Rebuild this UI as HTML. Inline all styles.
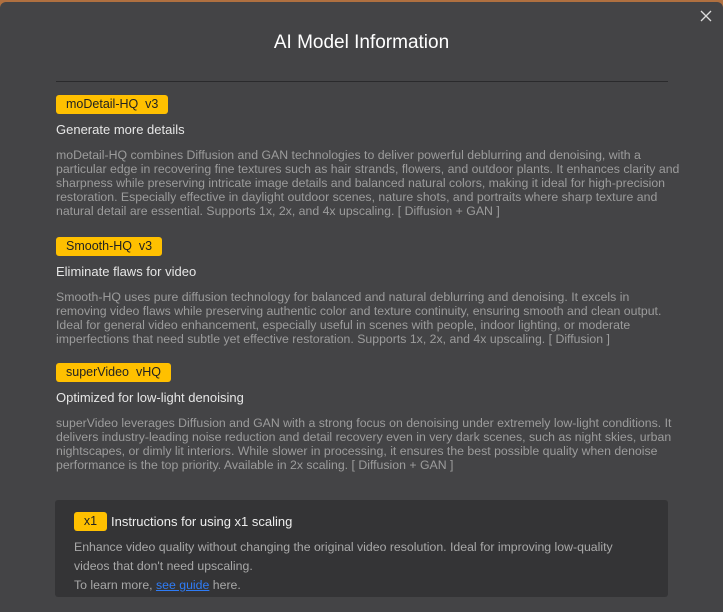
<!DOCTYPE html>
<html><head><meta charset="utf-8"><style>
*{margin:0;padding:0;box-sizing:border-box}
body{width:723px;height:607px;overflow:hidden;background:#b07040;font-family:"Liberation Sans",Arial,sans-serif;position:relative}
.m{position:absolute;left:0;top:2px;width:723px;height:610px;background:#444446;border-radius:6px 6px 0 0}
.t{position:absolute;top:30px;left:0;width:723px;text-align:center;color:#fff;font-size:19px}
.x{position:absolute;right:11px;top:8px}
.hr{position:absolute;left:56px;top:79px;width:612px;height:1px;background:#2a2a2c}
.b{position:absolute;left:56px;height:19px;background:#ffc000;border-radius:3px;color:#222;font-size:12.5px;line-height:19px;padding:0 10px;white-space:pre}
.s{position:absolute;left:56px;color:#e6e6e6;font-size:13px}
.d{position:absolute;left:56px;width:626px;color:#9c9c9c;font-size:12.3px;line-height:14px}
.box{position:absolute;left:55px;top:498px;width:613px;height:97px;background:#343436;border-radius:3px}
.box .x1{position:absolute;left:19px;top:12px;width:33px;height:19px;background:#ffc000;border-radius:3px;color:#222;font-size:12.5px;line-height:19px;text-align:center}
.box .h{position:absolute;left:56px;top:14px;color:#eee;font-size:13px}
.box .p{position:absolute;left:19px;top:38px;color:#a8a8a8;font-size:12.3px;line-height:19px;width:560px}
a{color:#2f7cf6;text-decoration:underline}
</style></head><body>
<div class="m">
<div class="t">AI Model Information</div>
<svg class="x" width="12" height="12" viewBox="0 0 12 12"><path d="M1 1L11 11M11 1L1 11" stroke="#ddd" stroke-width="1.3"/></svg>
<div class="hr"></div>
<div class="b" style="top:93px">moDetail-HQ  v3</div>
<div class="s" style="top:120px">Generate more details</div>
<div class="d" style="top:146px">moDetail-HQ combines Diffusion and GAN technologies to deliver powerful deblurring and denoising, with a particular edge in recovering fine textures such as hair strands, flowers, and outdoor plants. It enhances clarity and sharpness while preserving intricate image details and balanced natural colors, making it ideal for high-precision restoration. Especially effective in daylight outdoor scenes, nature shots, and portraits where sharp texture and natural detail are essential. Supports 1x, 2x, and 4x upscaling. [ Diffusion + GAN ]</div>
<div class="b" style="top:235px">Smooth-HQ  v3</div>
<div class="s" style="top:262px">Eliminate flaws for video</div>
<div class="d" style="top:288px">Smooth-HQ uses pure diffusion technology for balanced and natural deblurring and denoising. It excels in removing video flaws while preserving authentic color and texture continuity, ensuring smooth and clean output. Ideal for general video enhancement, especially useful in scenes with people, indoor lighting, or moderate imperfections that need subtle yet effective restoration. Supports 1x, 2x, and 4x upscaling. [ Diffusion ]</div>
<div class="b" style="top:361px">superVideo  vHQ</div>
<div class="s" style="top:388px">Optimized for low-light denoising</div>
<div class="d" style="top:414px">superVideo leverages Diffusion and GAN with a strong focus on denoising under extremely low-light conditions. It delivers industry-leading noise reduction and detail recovery even in very dark scenes, such as night skies, urban nightscapes, or dimly lit interiors. While slower in processing, it ensures the best possible quality when denoise performance is the top priority. Available in 2x scaling. [ Diffusion + GAN ]</div>
<div class="box">
<div class="x1">x1</div>
<div class="h">Instructions for using x1 scaling</div>
<div class="p">Enhance video quality without changing the original video resolution. Ideal for improving low-quality videos that don't need upscaling.<br>To learn more, <a>see guide</a> here.</div>
</div>
</div>
</body></html>
